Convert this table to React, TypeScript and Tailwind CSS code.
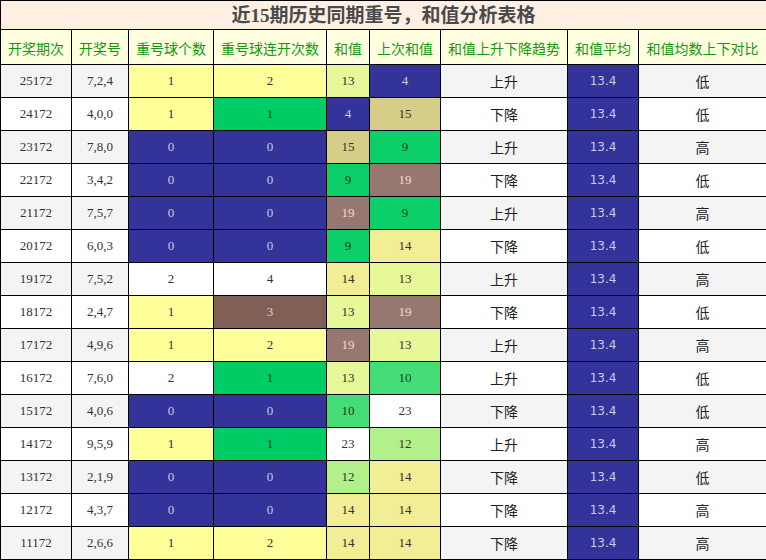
import React from 'react';

// sum-value colour by number
const SUM_BG: Record<number, string> = {
  4: 'bg-[#333399] text-[#cfcfe6]',
  9: 'bg-[#0ccf6a] text-[#1f3d1f]',
  10: 'bg-[#44dd77] text-[#1f3d1f]',
  12: 'bg-[#b2f08a] text-[#333]',
  13: 'bg-[#e6f898] text-[#333]',
  14: 'bg-[#f2ee96] text-[#333]',
  15: 'bg-[#d6cd88] text-[#333]',
  19: 'bg-[#967870] text-[#e6dcdc]',
  23: 'bg-white text-[#333]',
};

const CNT_BG: Record<string, string> = {
  '0': 'bg-[#333399] text-[#c9c9e6]',
  '1': 'bg-[#ffff99] text-[#333]',
  '2': 'bg-white text-[#333]',
};

const STREAK_BG: Record<string, string> = {
  '0': 'bg-[#333399] text-[#c9c9e6]',
  '1': 'bg-[#00cc66] text-[#1f3d1f]',
  '2': 'bg-[#ffff99] text-[#333]',
  '3': 'bg-[#806055] text-[#e0d0d0]',
  '4': 'bg-white text-[#333]',
};

const rows = [
  ['25172', '7,2,4', '1', '2', 13, 4, '上升', '低'],
  ['24172', '4,0,0', '1', '1', 4, 15, '下降', '低'],
  ['23172', '7,8,0', '0', '0', 15, 9, '上升', '高'],
  ['22172', '3,4,2', '0', '0', 9, 19, '下降', '低'],
  ['21172', '7,5,7', '0', '0', 19, 9, '上升', '高'],
  ['20172', '6,0,3', '0', '0', 9, 14, '下降', '低'],
  ['19172', '7,5,2', '2', '4', 14, 13, '上升', '高'],
  ['18172', '2,4,7', '1', '3', 13, 19, '下降', '低'],
  ['17172', '4,9,6', '1', '2', 19, 13, '上升', '高'],
  ['16172', '7,6,0', '2', '1', 13, 10, '上升', '低'],
  ['15172', '4,0,6', '0', '0', 10, 23, '下降', '低'],
  ['14172', '9,5,9', '1', '1', 23, 12, '上升', '高'],
  ['13172', '2,1,9', '0', '0', 12, 14, '下降', '低'],
  ['12172', '4,3,7', '0', '0', 14, 14, '下降', '高'],
  ['11172', '2,6,6', '1', '2', 14, 14, '下降', '高'],
] as const;

const headers = ['开奖期次', '开奖号', '重号球个数', '重号球连开次数', '和值', '上次和值', '和值上升下降趋势', '和值平均', '和值均数上下对比'];
const widths = ['w-[71px]', 'w-[57px]', 'w-[85px]', 'w-[113px]', 'w-[43px]', 'w-[71px]', 'w-[127px]', 'w-[71px]', 'w-[128px]'];

const serif = "font-['Liberation_Serif','Times_New_Roman',serif] text-[13px]";
const cjk = "font-['Noto_Sans_CJK_SC','Noto_Sans',sans-serif] text-[14px]";

export default function App() {
  return (
    <div className="w-[766px] h-[560px] bg-white overflow-hidden">
      <table className="w-[766px] table-fixed border-collapse border border-black">
        <colgroup>
          {widths.map((w, i) => <col key={i} className={w} />)}
        </colgroup>
        <thead>
          <tr className="h-[29px]">
            <th colSpan={9} className="border border-black bg-[#fdf0e3] text-[#4a4a4a] text-[19px] font-bold font-['Liberation_Serif','Noto_Sans_CJK_SC',serif] leading-none">
              近15期历史同期重号，和值分析表格
            </th>
          </tr>
          <tr className="h-[35px] bg-[#ffffe0]">
            {headers.map(h => (
              <th key={h} className={`border border-black text-[#119911] font-normal ${cjk} whitespace-nowrap p-0 pt-[2px]`}>{h}</th>
            ))}
          </tr>
        </thead>
        <tbody>
          {rows.map((r, i) => {
            const rowBg = i % 2 === 0 ? 'bg-[#f4f4f4]' : 'bg-white';
            return (
              <tr key={r[0]} className={`h-[33px] ${rowBg} text-center`}>
                <td className={`border border-black text-[#333] ${serif}`}>{r[0]}</td>
                <td className={`border border-black text-[#333] ${serif}`}>{r[1]}</td>
                <td className={`border border-black ${serif} ${CNT_BG[r[2]]}`}>{r[2]}</td>
                <td className={`border border-black ${serif} ${STREAK_BG[r[3]]}`}>{r[3]}</td>
                <td className={`border border-black ${serif} ${SUM_BG[r[4]]}`}>{r[4]}</td>
                <td className={`border border-black ${serif} ${SUM_BG[r[5]]}`}>{r[5]}</td>
                <td className={`border border-black text-[#222] ${cjk}`}>{r[6]}</td>
                <td className="border border-black bg-[#333399] text-[#c9c9e6] font-['DejaVu_Sans',sans-serif] text-[12px]">13.4</td>
                <td className={`border border-black text-[#222] ${cjk}`}>{r[7]}</td>
              </tr>
            );
          })}
        </tbody>
      </table>
    </div>
  );
}
